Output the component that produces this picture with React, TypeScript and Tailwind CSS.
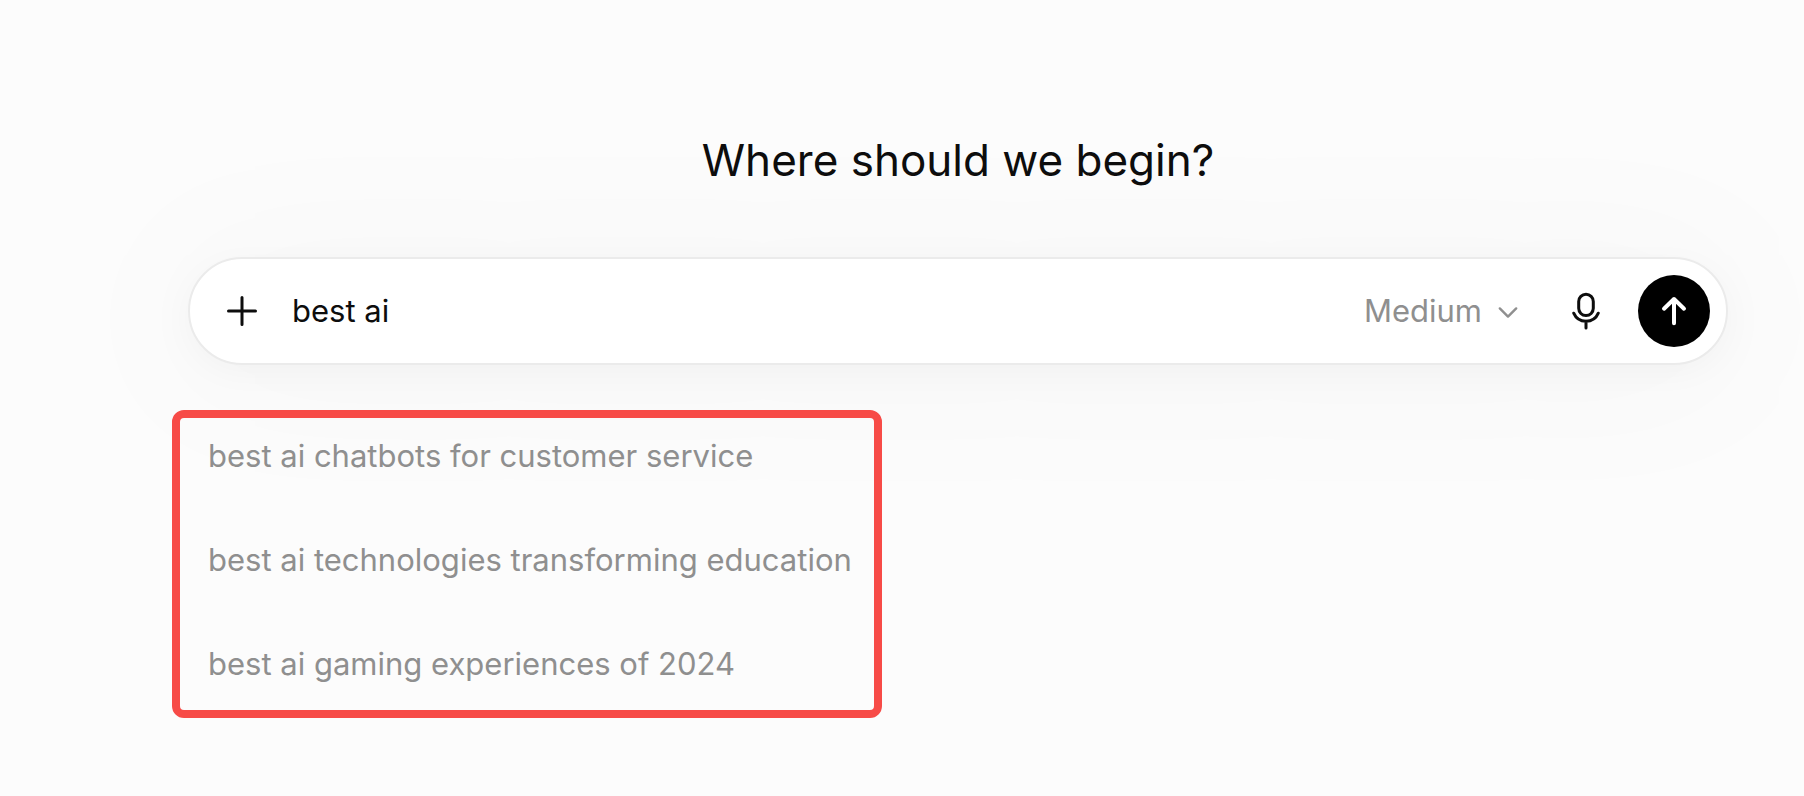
import type { ButtonHTMLAttributes } from "react";
import clsx from "clsx";

const suggestions = [
  "best ai chatbots for customer service",
  "best ai technologies transforming education",
  "best ai gaming experiences of 2024",
];

function IconButton({ className, ...props }: ButtonHTMLAttributes<HTMLButtonElement>) {
  return (
    <button
      type="button"
      className={clsx("flex size-[72px] shrink-0 items-center justify-center rounded-full", className)}
      {...props}
    />
  );
}

function PlusIcon() {
  return (
    <svg viewBox="0 0 32 32" className="size-8" fill="none" stroke="currentColor" strokeWidth="3" strokeLinecap="round" aria-hidden="true">
      <path d="M16 2.5v27M2.5 16h27" />
    </svg>
  );
}

function ChevronIcon() {
  return (
    <svg viewBox="0 0 20 20" className="size-5" fill="none" stroke="currentColor" strokeWidth="2.4" strokeLinecap="round" strokeLinejoin="round" aria-hidden="true">
      <path d="M1.8 7.4l8.2 8.2L18.2 7.4" />
    </svg>
  );
}

function MicIcon() {
  return (
    <svg viewBox="0 0 36 40" className="h-10 w-9" fill="none" stroke="currentColor" strokeWidth="3" aria-hidden="true">
      <rect x="10.7" y="3.2" width="14.6" height="21.4" rx="7.3" />
      <path d="M5.7 22.2a13.4 13.4 0 0 0 24.6 0M18 30v7" strokeLinecap="round" />
    </svg>
  );
}

function ArrowUpIcon() {
  return (
    <svg viewBox="0 0 32 32" className="size-8" fill="none" stroke="currentColor" strokeWidth="4" strokeLinecap="round" strokeLinejoin="round" aria-hidden="true">
      <path d="M16 28.3V4M6 13.7L16 4l10 9.7" />
    </svg>
  );
}

function Composer() {
  return (
    <form
      className="flex h-[108px] items-center rounded-full border-2 border-[#ebebeb] bg-white px-4 shadow-[0_8px_160px_32px_rgba(0,0,0,0.024),0_8px_32px_rgba(0,0,0,0.032)]"
      onSubmit={(event) => event.preventDefault()}
    >
      <IconButton aria-label="Add files">
        <PlusIcon />
      </IconButton>
      <input
        aria-label="Message"
        defaultValue="best ai"
        className="ml-[14px] min-w-0 flex-1 bg-transparent text-[31px] leading-10 outline-none"
      />
      <button type="button" className="mr-8 flex items-center gap-4 text-[31px] leading-10 text-[#8f8f8f]">
        Medium
        <ChevronIcon />
      </button>
      <IconButton aria-label="Dictate">
        <MicIcon />
      </IconButton>
      <IconButton type="submit" aria-label="Send" className="ml-4 bg-black text-white">
        <ArrowUpIcon />
      </IconButton>
    </form>
  );
}

export default function App() {
  return (
    <main className="min-h-screen overflow-hidden bg-[#fcfcfc] pr-[76px] pl-[188px] font-['Inter',sans-serif] text-[#0d0d0d]">
      <h1 className="pt-33 text-center text-[44px] leading-14">Where should we begin?</h1>
      <div className="mt-[69px]">
        <Composer />
      </div>
      <ul className="mt-[45px] -ml-4 flex w-[710px] flex-col gap-16 rounded-xl border-8 border-[#f74b47] pt-[18px] pb-[26px] pl-7">
        {suggestions.map((suggestion) => (
          <li key={suggestion} className="flex">
            <button type="button" className="text-[31px] leading-10 text-[#8f8f8f]">
              {suggestion}
            </button>
          </li>
        ))}
      </ul>
    </main>
  );
}
